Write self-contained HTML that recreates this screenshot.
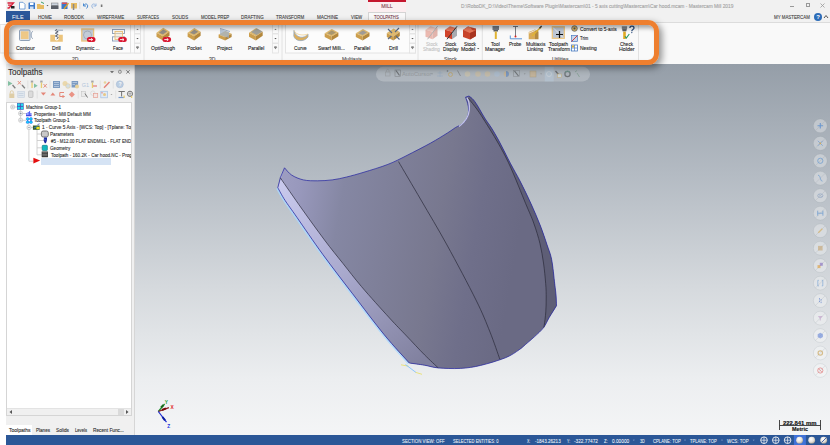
<!DOCTYPE html>
<html><head><meta charset="utf-8">
<style>
*{margin:0;padding:0;box-sizing:border-box}
html,body{width:830px;height:445px;overflow:hidden;background:#fff;font-family:"Liberation Sans",sans-serif;position:relative}
.a{position:absolute}
.t{position:absolute;white-space:nowrap;line-height:1;transform-origin:0 0;-webkit-text-stroke:0.12px currentColor}
</style></head><body>
<div class="a" style="left:6px;top:0px;width:824px;height:22px;background:#f1f1f1"></div>
<div class="a" style="left:6px;top:22px;width:824px;height:42px;background:#f9f9f9;border-top:1px solid #dcdcdc"></div>
<div class="a" style="left:6px;top:64px;width:129px;height:371px;background:#f0f0f0"></div>
<div class="a" style="left:134px;top:64px;width:1px;height:371px;background:#d6d6d6"></div>
<div class="a" style="left:135px;top:64px;width:695px;height:371px;background:linear-gradient(#959ea8 0%,#b4bbc3 30%,#d5d9dd 60%,#eceef0 85%,#f4f5f6 100%)"></div>
<div class="a" style="left:6px;top:435px;width:824px;height:10px;background:#2b5797"></div>
<svg class="a" style="left:0px;top:0px" width="830" height="64" viewBox="0 0 830 64"><rect x="10.5" y="24.5" width="130" height="28.5" fill="#fcfcfc" stroke="#e4e4e4" stroke-width="1"/><rect x="134.5" y="24.5" width="6" height="9.0" fill="#fafafa" stroke="#e2e2e2" stroke-width="0.8"/><rect x="134.5" y="34" width="6" height="9" fill="#fafafa" stroke="#e2e2e2" stroke-width="0.8"/><rect x="134.5" y="43.5" width="6" height="9.5" fill="#fafafa" stroke="#e2e2e2" stroke-width="0.8"/><path d="M136.3,30 L137.5,28.8 L138.7,30Z" fill="#777"/><path d="M136.3,38 L137.5,39.2 L138.7,38Z" fill="#555"/><path d="M136.3,46.5 H138.7 M136.3,47.5 L137.5,48.7 L138.7,47.5Z" stroke="#666" stroke-width="0.6" fill="#555"/><rect x="147.5.5" y="24.5" width="130.5" height="28.5" fill="#fcfcfc" stroke="#e4e4e4" stroke-width="1"/><rect x="272.5" y="24.5" width="6" height="9.0" fill="#fafafa" stroke="#e2e2e2" stroke-width="0.8"/><rect x="272.5" y="34" width="6" height="9" fill="#fafafa" stroke="#e2e2e2" stroke-width="0.8"/><rect x="272.5" y="43.5" width="6" height="9.5" fill="#fafafa" stroke="#e2e2e2" stroke-width="0.8"/><path d="M274.3,30 L275.5,28.8 L276.7,30Z" fill="#777"/><path d="M274.3,38 L275.5,39.2 L276.7,38Z" fill="#555"/><path d="M274.3,46.5 H276.7 M274.3,47.5 L275.5,48.7 L276.7,47.5Z" stroke="#666" stroke-width="0.6" fill="#555"/><rect x="285.5" y="24.5" width="130" height="28.5" fill="#fcfcfc" stroke="#e4e4e4" stroke-width="1"/><rect x="409.5" y="24.5" width="6" height="9.0" fill="#fafafa" stroke="#e2e2e2" stroke-width="0.8"/><rect x="409.5" y="34" width="6" height="9" fill="#fafafa" stroke="#e2e2e2" stroke-width="0.8"/><rect x="409.5" y="43.5" width="6" height="9.5" fill="#fafafa" stroke="#e2e2e2" stroke-width="0.8"/><path d="M411.3,30 L412.5,28.8 L413.7,30Z" fill="#777"/><path d="M411.3,38 L412.5,39.2 L413.7,38Z" fill="#555"/><path d="M411.3,46.5 H413.7 M411.3,47.5 L412.5,48.7 L413.7,47.5Z" stroke="#666" stroke-width="0.6" fill="#555"/><path d="M144,24 V62" stroke="#e2e2e2" stroke-width="1"/><path d="M282,24 V62" stroke="#e2e2e2" stroke-width="1"/><path d="M418,24 V62" stroke="#e2e2e2" stroke-width="1"/><path d="M482.3,24 V62" stroke="#e2e2e2" stroke-width="1"/><path d="M638.5,24 V62" stroke="#e2e2e2" stroke-width="1"/><rect x="19.5" y="30" width="10.5" height="10.5" rx="1" fill="#dfe5ee" stroke="#8396b0" stroke-width="0.9"/><rect x="20.8" y="31.3" width="7.8" height="7.8" fill="#eec887"/><path d="M32.8,31.2 C30.6,32.5 30.6,37.5 32.8,38.8" stroke="#8396b0" stroke-width="0.9" fill="none"/><path d="M50.3,34.8 H55 V39.8 Q56.8,41 58.5,39.8 V34.8 H62.8 V41.8 H50.3Z" fill="#ecc47c"/><path d="M56.8,29 L55.3,30.5 L58.2,31.8 L55.3,33.2 L58.2,34.6 L55.3,36 L58.2,37.4 L56.8,39.2" stroke="#4f5666" stroke-width="0.9" fill="none"/><path d="M57,30.2 H63" stroke="#8396b0" stroke-width="0.8"/><rect x="81.8" y="29" width="11.8" height="12" fill="#c3ccd8" stroke="#ecc47c" stroke-width="1.3"/><circle cx="87.5" cy="35" r="4" fill="none" stroke="#9aa6b6" stroke-width="0.8"/><path d="M89.4,37 H93.0 A2.5,2.5 0 0 1 93.0,42 H89.4 A2.5,2.5 0 0 1 89.4,37Z" fill="#d8152f"/><path d="M88.7,39.6 H92.5 M91.2,38.3 L92.7,39.6 L91.2,40.9" stroke="#fff" stroke-width="0.9" fill="none"/><rect x="112.5" y="29.5" width="12" height="4" fill="none" stroke="#8b9cb5" stroke-width="0.9"/><rect x="112.5" y="36.8" width="12" height="4.2" fill="none" stroke="#8b9cb5" stroke-width="0.9"/><rect x="115" y="31.5" width="7.5" height="8" fill="#f3e4c4" fill-opacity="0.5" stroke="#e9c07a" stroke-width="0.9"/><path d="M120.7,37 H124.3 A2.5,2.5 0 0 1 124.3,42 H120.7 A2.5,2.5 0 0 1 120.7,37Z" fill="#d8152f"/><path d="M120.0,39.6 H123.8 M122.5,38.3 L124.0,39.6 L122.5,40.9" stroke="#fff" stroke-width="0.9" fill="none"/><path d="M156.5,32.626 L163.26,27.8 L169.5,31.61 L163.0,36.182Z" fill="#dfb96e"/><path d="M156.5,32.626 L163.0,36.182 L163.0,40.5 L156.5,36.69Z" fill="#cc9e4c"/><path d="M163.0,36.182 L169.5,31.61 L169.5,35.674 L163.0,40.5Z" fill="#b4883c"/><path d="M158.84,32.626 L163.26,29.578 L167.16,31.61 L163.0,34.404Z" fill="#7e8188" opacity="0.8"/><path d="M165.0,37 H168.60000000000002 A2.5,2.5 0 0 1 168.60000000000002,42 H165.0 A2.5,2.5 0 0 1 165.0,37Z" fill="#d8152f"/><path d="M164.3,39.6 H168.10000000000002 M166.8,38.3 L168.3,39.6 L166.8,40.9" stroke="#fff" stroke-width="0.9" fill="none"/><path d="M187.6,32.75 L194.35999999999999,28 L200.6,31.75 L194.1,36.25Z" fill="#dfb96e"/><path d="M187.6,32.75 L194.1,36.25 L194.1,40.5 L187.6,36.75Z" fill="#cc9e4c"/><path d="M194.1,36.25 L200.6,31.75 L200.6,35.75 L194.1,40.5Z" fill="#b4883c"/><path d="M189.94,32.75 L194.35999999999999,29.75 L198.26,31.75 L194.1,34.5Z" fill="#7e8188" opacity="0.8"/><path d="M218.6,34.61 L225.35999999999999,31 L231.6,33.85 L225.1,37.27Z" fill="#dfb96e"/><path d="M218.6,34.61 L225.1,37.27 L225.1,40.5 L218.6,37.65Z" fill="#cc9e4c"/><path d="M225.1,37.27 L231.6,33.85 L231.6,36.89 L225.1,40.5Z" fill="#b4883c"/><path d="M220,29 L229,32 L229,38 L220,35Z" fill="#9db0c8" opacity="0.7"/><path d="M220,28.5 L230,31.5" stroke="#7890b0" stroke-width="0.7"/><path d="M249,32.75 L256.12399999999997,28 L262.7,31.75 L255.85,36.25Z" fill="#dfb96e"/><path d="M249,32.75 L255.85,36.25 L255.85,40.5 L249,36.75Z" fill="#cc9e4c"/><path d="M255.85,36.25 L262.7,31.75 L262.7,35.75 L255.85,40.5Z" fill="#b4883c"/><path d="M251,32 L257,28.5 L262.5,31.5 L256.5,35Z" fill="#8b98a8" opacity="0.75"/><path d="M294,30.5 C295.5,38 304,39.5 308,34 L308,37 C304,42.5 295,41.5 293.8,36Z" fill="#dcae5c" stroke="#97a9bf" stroke-width="0.8"/><path d="M294,30.5 C296,35 303,36 308,34" fill="none" stroke="#f0d090" stroke-width="0.8"/><path d="M324.7,33.37 L331.82399999999996,29 L338.4,32.45 L331.54999999999995,36.59Z" fill="#dfb96e"/><path d="M324.7,33.37 L331.54999999999995,36.59 L331.54999999999995,40.5 L324.7,37.05Z" fill="#cc9e4c"/><path d="M331.54999999999995,36.59 L338.4,32.45 L338.4,36.13 L331.54999999999995,40.5Z" fill="#b4883c"/><path d="M327.166,33.37 L331.82399999999996,30.61 L335.93399999999997,32.45 L331.54999999999995,34.980000000000004Z" fill="#9a8f70" opacity="0.8"/><path d="M355.8,33.37 L362.924,29 L369.5,32.45 L362.65,36.59Z" fill="#dfb96e"/><path d="M355.8,33.37 L362.65,36.59 L362.65,40.5 L355.8,37.05Z" fill="#cc9e4c"/><path d="M362.65,36.59 L369.5,32.45 L369.5,36.13 L362.65,40.5Z" fill="#b4883c"/><path d="M358.266,33.37 L362.924,30.61 L367.034,32.45 L362.65,34.980000000000004Z" fill="#8f94a0" opacity="0.8"/><path d="M386.8,33.06 L393.56,28.5 L399.8,32.1 L393.3,36.42Z" fill="#dfb96e"/><path d="M386.8,33.06 L393.3,36.42 L393.3,40.5 L386.8,36.9Z" fill="#cc9e4c"/><path d="M393.3,36.42 L399.8,32.1 L399.8,35.94 L393.3,40.5Z" fill="#b4883c"/><path d="M388,29 L392,33 M399,28 L395,32 M388,39 L391.5,36 M399.5,39.5 L396,36" stroke="#5a6a85" stroke-width="1.1"/><g opacity="0.35"><path d="M425.5,29.8 L430.5,26.3 L437.5,28.3 L432.5,31.8Z" fill="#e87a5e"/><path d="M425.5,29.8 L432.5,31.8 L432.5,39.3 L425.5,36.8Z" fill="#d2432a"/><path d="M432.5,31.8 L437.5,28.3 L437.5,35.8 L432.5,39.3Z" fill="#b8351f"/><path d="M427.5,39.3 L437.5,26.3" stroke="#333" stroke-width="1"/></g><g opacity="1"><path d="M445,29.8 L450,26.3 L457,28.3 L452,31.8Z" fill="#e87a5e"/><path d="M445,29.8 L452,31.8 L452,39.3 L445,36.8Z" fill="#d2432a"/><path d="M452,31.8 L457,28.3 L457,35.8 L452,39.3Z" fill="#a8abb0"/><path d="M447,39.3 L457,26.3" stroke="#333" stroke-width="1"/></g><path d="M463,30 L468,26.5 L476,28.5 L476,36 L470,39.5 L463,37Z" fill="#c8442a"/><path d="M463,30 L468,26.5 L471,27.5 Q471,31 476,30.5 L470,33Z" fill="#e8785a"/><path d="M470,33 L476,30.5 L476,36 L470,39.5Z" fill="#a83420"/><rect x="492.5" y="26" width="6.5" height="4" fill="#777c84"/><rect x="493.5" y="30" width="4.5" height="1.5" fill="#5e636a"/><rect x="494.8" y="31.5" width="2" height="7.5" fill="#e0b332"/><path d="M513,26.5 H518 M515.5,26.5 V36" stroke="#6a6f78" stroke-width="0.9"/><circle cx="515.5" cy="36.5" r="1" fill="#d82020"/><path d="M510.3,35.5 V38.8 H522" stroke="#4b8ad4" stroke-width="0.9" fill="none"/><path d="M528.7,32 L535,29.5 L535,39.3 L528.7,39.3Z" fill="#d8aa58"/><path d="M535,29.5 L538.5,31.5 L538.5,39.3 L535,39.3Z" fill="#b48a40"/><path d="M532,36 L541,27" stroke="#e0b332" stroke-width="1.4"/><path d="M539.5,28.3 L541.7,26.1" stroke="#444" stroke-width="1.4"/><path d="M529,33 L536,30" stroke="#fff" stroke-width="0.7"/><rect x="552.3" y="26.8" width="12" height="11.5" fill="#bcc6d4" stroke="#ecc47c" stroke-width="1.2"/><path d="M553,27.5 L563,37.5" stroke="#fff" stroke-width="0.6"/><path d="M559.5,31 V38 M556,34.5 H563" stroke="#111" stroke-width="1.2"/><circle cx="574.5" cy="28.5" r="2.8" fill="#d9b460" stroke="#6a6a6a" stroke-width="0.8"/><circle cx="574.5" cy="28.5" r="1" fill="#555"/><rect x="571.5" y="35.5" width="6" height="6" fill="#c8d6ea" stroke="#4a7ac0" stroke-width="0.7"/><path d="M571.5,41.5 L577.5,35.5" stroke="#d03030" stroke-width="0.9"/><rect x="571.5" y="45" width="6" height="6" fill="#fff" stroke="#4a7ac0" stroke-width="0.8"/><path d="M574.5,45 V51 M571.5,48 H577.5" stroke="#4a7ac0" stroke-width="0.7"/><rect x="572" y="45.5" width="2" height="2" fill="#e0b332"/><path d="M621.8,26.3 H627.1 V29 L626.3,31.2 H622.6 L621.8,29Z" fill="#7f848b"/><rect x="622.8" y="29.2" width="3.3" height="2" fill="#5a5f66"/><rect x="623.2" y="31.7" width="2.6" height="7.3" fill="#e0aa22"/><path d="M625,36.3 L626.3,38 L629.3,34" stroke="#2a9a6a" stroke-width="1.1" fill="none"/><path d="M629.9,28 C629.9,25.6 634,25.6 634,28 C634,29.6 631.8,29.6 631.8,31.3" stroke="#2e4f7e" stroke-width="1.3" fill="none"/><circle cx="631.8" cy="32.6" r="0.7" fill="#2e4f7e"/><path d="M7.5,3 H13.5 L9,8 H7.5 M8,5.2 H12" stroke="#d8203a" stroke-width="1.3" fill="none"/><rect x="11" y="6" width="3.5" height="2.5" fill="#222"/><path d="M19.5,2.3 H23 L25,4.3 V9 H19.5Z" fill="#fff" stroke="#5b8fd0" stroke-width="0.8"/><rect x="28.5" y="2.5" width="6.5" height="6.5" fill="#3b78c8" rx="0.5"/><rect x="30" y="2.8" width="3.5" height="2.2" fill="#fff"/><rect x="30" y="6.5" width="3.5" height="2.5" fill="#d0ddf0"/><path d="M37,4 H40 L41,5 H44 V9 H37Z" fill="#e7bb62"/><path d="M41,2 L44,3.5" stroke="#3aa06a" stroke-width="1"/><path d="M46.5,5 L48.5,5 L47.5,6.2Z" fill="#555"/><rect x="51.5" y="3" width="6.5" height="2.5" fill="#cdd5df" stroke="#777" stroke-width="0.5"/><rect x="51" y="5.5" width="7.5" height="3.5" fill="#5a5e66"/><rect x="61.5" y="2.5" width="6" height="6.5" fill="#3b78c8"/><rect x="62" y="2.5" width="5" height="1.5" fill="#e05050"/><path d="M64,9 L68.5,3.2" stroke="#e0a020" stroke-width="1.3"/><rect x="71" y="3" width="6" height="5.5" fill="#e7bb62"/><rect x="72.8" y="4" width="1.5" height="6" fill="#888"/><path d="M79.8,2 V9" stroke="#d0d0d0" stroke-width="0.7"/><path d="M83.5,3.5 V6 H86 M83.8,5.8 C84.5,3 88.5,3.5 87.5,7 L86.5,8.5" stroke="#4a8ad0" stroke-width="1" fill="none"/><path d="M96,3.5 V6 H93.5 M95.7,5.8 C95,3 91,3.5 92,7 L93,8.5" stroke="#9ab8e0" stroke-width="1" fill="none"/><rect x="100.8" y="4.5" width="1.6" height="2.5" fill="#777"/></svg>
<div class="t" style="left:461.00px;top:4px;font-size:5.2px;color:#a4a4a4;transform:scaleX(0.935);">D:\RoboDK_D:\Video\Theme\Software Plugin\Mastercam\01 - 5 axis cutting\Mastercam\Car hood.mcam - Mastercam Mill 2019</div>
<div class="a" style="left:790px;top:5.5px;width:4px;height:0.8px;background:#999"></div>
<div class="a" style="left:806px;top:3px;width:3.5px;height:3.5px;border:0.8px solid #999"></div>
<svg class="a" style="left:820px;top:3px" width="5" height="5" viewBox="0 0 5 5"><path d="M0.5,0.5 L4.5,4.5 M4.5,0.5 L0.5,4.5" stroke="#999" stroke-width="0.8"/></svg>
<div class="a" style="left:368px;top:0px;width:38px;height:2px;background:#c5162e"></div>
<div class="a" style="left:368px;top:2px;width:38px;height:10px;background:#fbeef0"></div>
<div class="t" style="left:381.22px;top:4px;font-size:5.2px;color:#8a4a55;">MILL</div>
<div class="a" style="left:6px;top:11px;width:24px;height:11px;background:#2b579a"></div>
<div class="t" style="left:12.20px;top:15px;font-size:5.4px;color:#fff;transform:scaleX(1.017);-webkit-text-stroke:0">FILE</div>
<div class="t" style="left:37.60px;top:15px;font-size:5.5px;color:#444;transform:scaleX(0.842);">HOME</div>
<div class="t" style="left:64.00px;top:15px;font-size:5.5px;color:#444;transform:scaleX(0.839);">ROBODK</div>
<div class="t" style="left:97.00px;top:15px;font-size:5.5px;color:#444;transform:scaleX(0.806);">WIREFRAME</div>
<div class="t" style="left:137.00px;top:15px;font-size:5.5px;color:#444;transform:scaleX(0.742);">SURFACES</div>
<div class="t" style="left:171.60px;top:15px;font-size:5.5px;color:#444;transform:scaleX(0.803);">SOLIDS</div>
<div class="t" style="left:200.50px;top:15px;font-size:5.5px;color:#444;transform:scaleX(0.786);">MODEL PREP</div>
<div class="t" style="left:241.00px;top:15px;font-size:5.5px;color:#444;transform:scaleX(0.808);">DRAFTING</div>
<div class="t" style="left:276.40px;top:15px;font-size:5.5px;color:#444;transform:scaleX(0.810);">TRANSFORM</div>
<div class="t" style="left:317.00px;top:15px;font-size:5.5px;color:#444;transform:scaleX(0.828);">MACHINE</div>
<div class="t" style="left:350.80px;top:15px;font-size:5.5px;color:#444;transform:scaleX(0.797);">VIEW</div>
<div class="a" style="left:368px;top:12px;width:38px;height:11px;background:#f9f9f9;border:1px solid #d4d4d4;border-bottom:none"></div>
<div class="t" style="left:374.30px;top:15px;font-size:5.5px;color:#7a3a4a;transform:scaleX(0.762);">TOOLPATHS</div>
<div class="t" style="left:773.60px;top:15px;font-size:5.5px;color:#444;transform:scaleX(0.799);">MY MASTERCAM</div>
<div class="a" style="left:814px;top:13px;width:8px;height:8px;border-radius:50%;background:#2c6cb8;color:#fff;font-size:6px;line-height:8px;text-align:center;font-weight:bold">?</div>
<svg class="a" style="left:823px;top:14px" width="6" height="5" viewBox="0 0 6 5"><path d="M1 4 L3 1.5 L5 4" stroke="#555" stroke-width="1" fill="none"/></svg>
<div class="t" style="left:16.10px;top:46px;font-size:5.4px;color:#262626;transform:scaleX(0.973);">Contour</div>
<div class="t" style="left:52.00px;top:46px;font-size:5.4px;color:#262626;transform:scaleX(0.936);">Drill</div>
<div class="t" style="left:75.50px;top:46px;font-size:5.4px;color:#262626;transform:scaleX(0.870);">Dynamic ...</div>
<div class="t" style="left:113.40px;top:46px;font-size:5.4px;color:#262626;transform:scaleX(0.841);">Face</div>
<div class="t" style="left:151.00px;top:46px;font-size:5.4px;color:#262626;transform:scaleX(0.930);">OptiRough</div>
<div class="t" style="left:187.00px;top:46px;font-size:5.4px;color:#262626;transform:scaleX(0.878);">Pocket</div>
<div class="t" style="left:217.00px;top:46px;font-size:5.4px;color:#262626;transform:scaleX(0.892);">Project</div>
<div class="t" style="left:247.60px;top:46px;font-size:5.4px;color:#262626;transform:scaleX(0.911);">Parallel</div>
<div class="t" style="left:294.00px;top:46px;font-size:5.4px;color:#262626;transform:scaleX(0.889);">Curve</div>
<div class="t" style="left:318.00px;top:46px;font-size:5.4px;color:#262626;transform:scaleX(0.928);">Swarf Milli...</div>
<div class="t" style="left:354.00px;top:46px;font-size:5.4px;color:#262626;transform:scaleX(0.911);">Parallel</div>
<div class="t" style="left:388.50px;top:46px;font-size:5.4px;color:#262626;transform:scaleX(0.968);">Drill</div>
<div class="t" style="left:425.80px;top:42px;font-size:5.4px;color:#c4c4c4;transform:scaleX(0.859);">Stock</div>
<div class="t" style="left:423.30px;top:47px;font-size:5.4px;color:#c4c4c4;transform:scaleX(0.853);">Shading</div>
<div class="t" style="left:445.00px;top:42px;font-size:5.4px;color:#262626;transform:scaleX(0.829);">Stock</div>
<div class="t" style="left:442.80px;top:47px;font-size:5.4px;color:#262626;transform:scaleX(0.875);">Display</div>
<div class="t" style="left:463.70px;top:42px;font-size:5.4px;color:#262626;transform:scaleX(0.889);">Stock</div>
<div class="t" style="left:460.90px;top:47px;font-size:5.4px;color:#262626;transform:scaleX(0.959);">Model</div>
<svg class="a" style="left:476.5px;top:48px" width="3" height="2" viewBox="0 0 3 2"><path d="M0,0 H2.4 L1.2,1.3Z" fill="#555"/></svg>
<div class="t" style="left:491.40px;top:42px;font-size:5.4px;color:#262626;transform:scaleX(0.878);">Tool</div>
<div class="t" style="left:485.40px;top:47px;font-size:5.4px;color:#262626;transform:scaleX(0.943);">Manager</div>
<div class="t" style="left:509.30px;top:42px;font-size:5.4px;color:#262626;transform:scaleX(0.867);">Probe</div>
<div class="t" style="left:525.60px;top:42px;font-size:5.4px;color:#262626;transform:scaleX(0.928);">Multiaxis</div>
<div class="t" style="left:527.20px;top:47px;font-size:5.4px;color:#262626;transform:scaleX(0.947);">Linking</div>
<div class="t" style="left:548.90px;top:42px;font-size:5.4px;color:#262626;transform:scaleX(0.931);">Toolpath</div>
<div class="t" style="left:547.80px;top:47px;font-size:5.4px;color:#262626;transform:scaleX(0.910);">Transform</div>
<div class="t" style="left:620.00px;top:42px;font-size:5.4px;color:#262626;transform:scaleX(0.849);">Check</div>
<div class="t" style="left:619.00px;top:47px;font-size:5.4px;color:#262626;transform:scaleX(0.981);">Holder</div>
<div class="t" style="left:579.90px;top:27px;font-size:5.4px;color:#262626;transform:scaleX(0.899);">Convert to 5-axis</div>
<div class="t" style="left:579.90px;top:36px;font-size:5.4px;color:#262626;transform:scaleX(0.774);">Trim</div>
<div class="t" style="left:579.90px;top:46px;font-size:5.4px;color:#262626;transform:scaleX(0.923);">Nesting</div>
<div class="t" style="left:72.22px;top:57px;font-size:5.4px;color:#555;transform:scaleX(0.950);">2D</div>
<div class="t" style="left:208.72px;top:57px;font-size:5.4px;color:#555;transform:scaleX(0.950);">3D</div>
<div class="t" style="left:342.02px;top:57px;font-size:5.4px;color:#555;transform:scaleX(0.950);">Multiaxis</div>
<div class="t" style="left:444.28px;top:57px;font-size:5.4px;color:#555;transform:scaleX(0.950);">Stock</div>
<div class="t" style="left:551.73px;top:57px;font-size:5.4px;color:#555;transform:scaleX(0.950);">Utilities</div>
<div class="t" style="left:8.00px;top:68px;font-size:9px;color:#333;transform:scaleX(0.895);">Toolpaths</div>
<div class="a" style="left:6px;top:101.5px;width:126px;height:314px;background:#fff;border:1px solid #d5d5d5"></div>
<div class="a" style="left:7px;top:102px;width:124px;height:300px;overflow:hidden">
<div class="t" style="left:18.60px;top:3px;font-size:5.0px;color:#333;transform:scaleX(0.906)">Machine Group-1</div>
<div class="t" style="left:27.00px;top:10px;font-size:5.0px;color:#333;transform:scaleX(0.92)">Properties - Mill Default MM</div>
<div class="t" style="left:27.00px;top:16px;font-size:5.0px;color:#333;transform:scaleX(0.92)">Toolpath Group-1</div>
<div class="t" style="left:34.90px;top:23px;font-size:5.0px;color:#333;transform:scaleX(0.945)">1 - Curve 5 Axis - [WCS: Top] - [Tplane: Top]</div>
<div class="t" style="left:43.20px;top:30px;font-size:5.0px;color:#333;transform:scaleX(0.92)">Parameters</div>
<div class="t" style="left:43.80px;top:37px;font-size:5.0px;color:#333;transform:scaleX(0.883)">#5 - M12.00 FLAT ENDMILL - FLAT ENDMILL</div>
<div class="t" style="left:43.20px;top:44px;font-size:5.0px;color:#333;transform:scaleX(0.92)">Geometry</div>
<div class="t" style="left:43.50px;top:51px;font-size:5.0px;color:#333;transform:scaleX(0.92)">Toolpath - 160.2K - Car hood.NC - Program number 0</div>
</div>
<div class="a" style="left:41.3px;top:158.2px;width:70px;height:6.4px;background:#d5e3f4"></div>
<svg class="a" style="left:0px;top:64px" width="136" height="110" viewBox="0 64 136 110"><path d="M110,71.2 H114 L112,73Z" fill="#555"/><rect x="118.6" y="70.3" width="2.6" height="3" rx="1" fill="none" stroke="#777" stroke-width="0.8"/><path d="M126.3,70.3 L129.7,73.5 M129.7,70.3 L126.3,73.5" stroke="#777" stroke-width="0.9"/><g opacity="0.72"><path d="M8,81 L12.5,83.5 L8,86Z" fill="#5cae86"/><path d="M12.5,85 L15.3,88.2" stroke="#555" stroke-width="1.3"/><path d="M17.8,81 L21,84.5 M21,81 L17.8,84.5" stroke="#e0705a" stroke-width="1"/><path d="M22,85 L24.9,88.2" stroke="#555" stroke-width="1.3"/><path d="M27.8,80.5 V88.5" stroke="#d8d8d8" stroke-width="0.8"/><rect x="30.8" y="80.6" width="2.4" height="2" fill="#888"/><rect x="31.4" y="82.6" width="1.3" height="5.4" fill="#e6c040"/><path d="M34,83.5 L37.7,85.7 L34,88Z" fill="#5cae86"/><rect x="40.2" y="80.6" width="2.4" height="2" fill="#888"/><rect x="40.8" y="82.6" width="1.3" height="5.4" fill="#e6c040"/><path d="M43.5,84 L46.8,87.6 M46.8,84 L43.5,87.6" stroke="#e0705a" stroke-width="1"/><path d="M50,80.5 V88.5" stroke="#d8d8d8" stroke-width="0.8"/><rect x="53" y="81" width="7" height="7" fill="#4f7ab0"/><path d="M54,82.5 H59 M54,84.5 H59 M54,86.5 H59" stroke="#c8d8ee" stroke-width="0.6"/><circle cx="65" cy="83.5" r="2.5" fill="#e6c77a" opacity="0.8"/><circle cx="68" cy="86" r="2.3" fill="#c8d8e0" stroke="#e0c070" stroke-width="0.6"/><rect x="71.6" y="81" width="6.5" height="6.5" fill="#4f7ab0"/><path d="M72.5,82.5 H77 M72.5,84.5 H75" stroke="#c8d8ee" stroke-width="0.6"/><circle cx="77" cy="86.5" r="2" fill="#e6c77a"/><text x="81.8" y="87" font-family="Liberation Sans" font-size="5.5" fill="#9ab4d4">G1</text><rect x="91.2" y="80.6" width="2.4" height="2" fill="#888"/><rect x="91.8" y="82.6" width="1.3" height="5.4" fill="#e6c040"/><path d="M93,86 H97" stroke="#e05050" stroke-width="1.2"/><path d="M100.3,80.5 V88.5" stroke="#d8d8d8" stroke-width="0.8"/><path d="M104,87.8 L109.5,82" stroke="#e05a4a" stroke-width="1.4"/><circle cx="105" cy="82.5" r="1.3" fill="#e6c77a"/><path d="M113.3,80.5 V88.5" stroke="#d8d8d8" stroke-width="0.8"/><circle cx="119.8" cy="84.3" r="3.5" fill="#a8c0dc" stroke="#8aa8cc" stroke-width="0.6"/><text x="118.6" y="86.3" font-family="Liberation Sans" font-size="5" fill="#fff" font-weight="bold">?</text><rect x="9.3" y="93.5" width="5" height="4.5" fill="#d8c08a"/><path d="M10.3,93.5 V92 C10.3,90.3 13.3,90.3 13.3,92 V93.5" stroke="#d8c08a" stroke-width="0.9" fill="none"/><rect x="17.8" y="91.5" width="6.5" height="6" fill="#dbe4ee" stroke="#b4c4d8" stroke-width="0.6"/><path d="M18.5,93.5 H23.5 M18.5,95.5 H23.5" stroke="#a8bcd4" stroke-width="0.6"/><rect x="28.5" y="91" width="4.5" height="6.5" rx="1" fill="#d4d4d4" stroke="#999" stroke-width="0.6"/><path d="M37.2,90.5 V98.5" stroke="#d8d8d8" stroke-width="0.8"/><path d="M40.8,92.5 H46 L43.4,95.5Z" fill="#e0604c"/><path d="M50.4,95.5 H55.3 L52.8,92.5Z" fill="#e0604c"/><path d="M64,92.5 H59.8 V96.5 H64 M62.5,95.5 L64.5,96.5 L62.5,97.5" stroke="#e0604c" stroke-width="1" fill="none"/><path d="M71.8,91.5 L74.8,94.5 L71.8,97.5 L68.8,94.5Z" fill="#e8705c"/><path d="M78.3,90.5 V98.5" stroke="#d8d8d8" stroke-width="0.8"/><rect x="81.5" y="91.5" width="4" height="5" fill="#e8e8e8" stroke="#aaa" stroke-width="0.5"/><path d="M85,93.5 L87.5,97.5" stroke="#444" stroke-width="1"/><circle cx="92.8" cy="93.2" r="2.2" fill="none" stroke="#c8c8c8" stroke-width="0.6"/><rect x="93.5" y="93.5" width="4.2" height="4" fill="#f8e0dc" stroke="#e08070" stroke-width="0.7"/><rect x="100.8" y="91.3" width="6.8" height="6.5" fill="#dce8f6" stroke="#8ab0dc" stroke-width="0.7"/><circle cx="104.5" cy="94.5" r="1.5" fill="#e6b860"/><rect x="101.5" y="92" width="1" height="1.5" fill="#e05050"/><path d="M110.5,94 H112.5 L111.5,95Z" fill="#777"/><path d="M115.7,90.5 V98.5" stroke="#d8d8d8" stroke-width="0.8"/><path d="M118.5,91.5 H124.8 M121.6,91.5 V96.5" stroke="#444" stroke-width="1"/><path d="M118.5,97.5 H124" stroke="#4a7ac0" stroke-width="1.2"/><rect x="123.5" y="95.5" width="1.3" height="2.5" fill="#e6c040"/><circle cx="130" cy="93.8" r="2.6" fill="#fff" stroke="#333" stroke-width="0.9"/><path d="M128,93.8 H132 M130,91.5 V96" stroke="#333" stroke-width="0.5"/><rect x="131" y="96" width="1.2" height="2" fill="#e6c040"/></g><path d="M12.6,107 H17 M20.6,110 V120.3 M22.6,113.5 H26 M22.6,120.3 H26 M28.9,123.3 V161.2 H33.4 M30.9,127.5 H32.9 M37,130 V154.8 M37,134 H41.2 M37,140.5 H43.3 M37,147.8 H42.2 M37,154.8 H41.7" stroke="#c6c6c6" stroke-width="0.8" fill="none"/><rect x="10.7" y="105.1" width="3.8" height="3.8" rx="1.2" fill="#f4f4f4" stroke="#bdbdbd" stroke-width="0.7"/><path d="M11.7,107.0 H13.5" stroke="#6a7a90" stroke-width="0.6"/><rect x="18.7" y="111.5" width="3.9" height="3.9" rx="1.2" fill="#f4f4f4" stroke="#bdbdbd" stroke-width="0.7"/><path d="M19.7,113.45 H21.6 M20.65,112.5 V114.4" stroke="#6a7a90" stroke-width="0.6"/><rect x="18.7" y="118.3" width="3.8" height="3.8" rx="1.2" fill="#f4f4f4" stroke="#bdbdbd" stroke-width="0.7"/><path d="M19.7,120.2 H21.5" stroke="#6a7a90" stroke-width="0.6"/><rect x="27.1" y="125.6" width="3.8" height="3.8" rx="1.2" fill="#f4f4f4" stroke="#bdbdbd" stroke-width="0.7"/><path d="M28.1,127.5 H29.900000000000002" stroke="#6a7a90" stroke-width="0.6"/><rect x="17" y="103.1" width="6.7" height="6.7" fill="#4a5ab8"/><circle cx="18.7" cy="104.8" r="1.3" fill="#20e0f0"/><circle cx="22" cy="104.8" r="1.3" fill="#20e0f0"/><circle cx="18.7" cy="108.1" r="1.3" fill="#20e0f0"/><circle cx="22" cy="108.1" r="1.3" fill="#20e0f0"/><path d="M26,115.7 H31.6" stroke="#1a1ae0" stroke-width="1"/><path d="M26.8,115 V113 M28.2,115 V112 M29.6,115 V111.2 M30.9,115 V113" stroke="#2a3af0" stroke-width="0.9"/><path d="M27.6,118.9 H31 V122.2 H27.6Z" fill="#fff" stroke="#3050f0" stroke-width="0.8"/><circle cx="27.6" cy="118.9" r="1.4" fill="#10d8ff" stroke="#2040e0" stroke-width="0.4"/><circle cx="31" cy="118.9" r="1.4" fill="#10d8ff" stroke="#2040e0" stroke-width="0.4"/><circle cx="27.6" cy="122.2" r="1.4" fill="#10d8ff" stroke="#2040e0" stroke-width="0.4"/><circle cx="31" cy="122.2" r="1.4" fill="#10d8ff" stroke="#2040e0" stroke-width="0.4"/><path d="M32.9,125.5 H39.6 V129.8 H32.9Z" fill="#3a5a2a"/><path d="M34,128 L37.5,126.3" stroke="#2a8ad0" stroke-width="0.9"/><ellipse cx="38" cy="128" rx="1.8" ry="1.3" fill="#e8e020"/><path d="M37.5,124.7 L39.6,123.8" stroke="#2a3ab0" stroke-width="0.7"/><rect x="41.4" y="131" width="6.9" height="6" rx="1.8" fill="#c8c8c8" stroke="#6a6a6a" stroke-width="0.9"/><path d="M44,137.6 H47 V140.5 L45.8,143.3 H44.8 L43.6,140.5Z" fill="#1a2aa0"/><path d="M44,139 L47,140.5" stroke="#6a8ae0" stroke-width="0.5"/><rect x="42.2" y="145.3" width="5.2" height="5.2" rx="0.8" fill="#10b8c0" stroke="#087078" stroke-width="0.6"/><rect x="41.7" y="151.5" width="6.2" height="5.7" fill="#222"/><path d="M42.2,152.8 H47.4 M42.2,154.3 H47.4 M42.2,155.8 H47.4" stroke="#ddd" stroke-width="0.5"/><path d="M33.4,157.7 L40.2,160.5 L33.4,163.4Z" fill="#e41010"/></svg>
<div class="a" style="left:7px;top:408px;width:124px;height:7px;background:#f0f0f0;border-top:1px solid #e3e3e3"></div>
<div class="a" style="left:118px;top:409px;width:6px;height:6px;background:#dadada"></div>
<svg class="a" style="left:8px;top:409px" width="6" height="6" viewBox="0 0 6 6"><path d="M4 1 L1.5 3 L4 5Z" fill="#555"/></svg>
<svg class="a" style="left:124px;top:409px" width="6" height="6" viewBox="0 0 6 6"><path d="M2 1 L4.5 3 L2 5Z" fill="#555"/></svg>
<div class="a" style="left:6px;top:425px;width:26px;height:10px;background:#fff"></div>
<div class="t" style="left:8.50px;top:428px;font-size:5.2px;color:#333;transform:scaleX(0.966);">Toolpaths</div>
<div class="t" style="left:36.00px;top:428px;font-size:5.2px;color:#333;transform:scaleX(0.880);">Planes</div>
<div class="t" style="left:56.00px;top:428px;font-size:5.2px;color:#333;transform:scaleX(0.918);">Solids</div>
<div class="t" style="left:75.00px;top:428px;font-size:5.2px;color:#333;transform:scaleX(0.798);">Levels</div>
<div class="t" style="left:93.00px;top:428px;font-size:5.2px;color:#333;transform:scaleX(0.917);">Recent Func...</div>
<div class="t" style="left:402.00px;top:439px;font-size:5.0px;color:#f4f7fc;transform:scaleX(0.870);-webkit-text-stroke:0.05px #fff">SECTION VIEW: OFF</div>
<div class="t" style="left:453.20px;top:439px;font-size:5.0px;color:#f4f7fc;transform:scaleX(0.815);-webkit-text-stroke:0.05px #fff">SELECTED ENTITIES: 0</div>
<div class="t" style="left:526.70px;top:439px;font-size:5.0px;color:#f4f7fc;transform:scaleX(0.699);-webkit-text-stroke:0.05px #fff">X:</div>
<div class="t" style="left:534.80px;top:439px;font-size:5.0px;color:#f4f7fc;transform:scaleX(0.915);-webkit-text-stroke:0.05px #fff">-1843.26213</div>
<div class="t" style="left:566.90px;top:439px;font-size:5.0px;color:#f4f7fc;transform:scaleX(0.697);-webkit-text-stroke:0.05px #fff">Y:</div>
<div class="t" style="left:574.00px;top:439px;font-size:5.0px;color:#f4f7fc;transform:scaleX(0.949);-webkit-text-stroke:0.05px #fff">-322.77472</div>
<div class="t" style="left:604.30px;top:439px;font-size:5.0px;color:#f4f7fc;transform:scaleX(0.833);-webkit-text-stroke:0.05px #fff">Z:</div>
<div class="t" style="left:612.40px;top:439px;font-size:5.0px;color:#f4f7fc;transform:scaleX(0.952);-webkit-text-stroke:0.05px #fff">0.00000</div>
<div class="t" style="left:640.00px;top:439px;font-size:5.0px;color:#f4f7fc;transform:scaleX(0.751);-webkit-text-stroke:0.05px #fff">3D</div>
<div class="t" style="left:652.60px;top:439px;font-size:5.0px;color:#f4f7fc;transform:scaleX(0.845);-webkit-text-stroke:0.05px #fff">CPLANE: TOP</div>
<div class="t" style="left:690.00px;top:439px;font-size:5.0px;color:#f4f7fc;transform:scaleX(0.829);-webkit-text-stroke:0.05px #fff">TPLANE: TOP</div>
<div class="t" style="left:727.00px;top:439px;font-size:5.0px;color:#f4f7fc;transform:scaleX(0.884);-webkit-text-stroke:0.05px #fff">WCS: TOP</div>
<svg class="a" style="left:0px;top:435px" width="830" height="10" viewBox="0 435 830 10"><path d="M632.8,439.8 H634.8 L633.8,440.8Z" fill="#9ab0d8"/><path d="M684,439.8 H686 L685,440.8Z" fill="#9ab0d8"/><path d="M721,439.8 H723 L722,440.8Z" fill="#9ab0d8"/><path d="M752.7,439.8 H754.7 L753.7,440.8Z" fill="#9ab0d8"/><rect x="793.9" y="435" width="12" height="10" fill="#3f72d8"/><circle cx="764" cy="440.2" r="3.3" fill="none" stroke="#f4f4f4" stroke-width="0.9"/><path d="M760.7,440.2 H767.3 M764,436.9 V443.5" stroke="#f4f4f4" stroke-width="0.7"/><circle cx="775.8" cy="440.2" r="3.3" fill="none" stroke="#f4f4f4" stroke-width="0.9"/><path d="M772.5,440.2 H779.0999999999999 M775.8,436.9 V443.5" stroke="#f4f4f4" stroke-width="0.7"/><circle cx="787.6" cy="440.2" r="3.3" fill="none" stroke="#f4f4f4" stroke-width="0.9"/><path d="M784.3000000000001,440.2 H790.9 M787.6,436.9 V443.5" stroke="#f4f4f4" stroke-width="0.7"/><defs><radialGradient id="sph" cx="0.4" cy="0.35" r="0.7"><stop offset="0" stop-color="#ffffff"/><stop offset="0.6" stop-color="#e4e0d8"/><stop offset="1" stop-color="#a8a090"/></radialGradient></defs><circle cx="799.6" cy="440.2" r="3.4" fill="url(#sph)"/><circle cx="811.7" cy="440.2" r="3.4" fill="url(#sph)"/><circle cx="823.7" cy="440.2" r="3.4" fill="url(#sph)"/><path d="M821.5,442.5 L826,438" stroke="#3a5aa0" stroke-width="0.9"/></svg>
<svg class="a" style="left:0px;top:0px" width="830" height="445" viewBox="0 0 830 445"><defs>
<linearGradient id="gf" gradientUnits="userSpaceOnUse" x1="285" y1="190" x2="520" y2="230">
<stop offset="0" stop-color="#9c9cc0"/><stop offset="0.06" stop-color="#9898bc"/><stop offset="0.24" stop-color="#8587a3"/><stop offset="0.66" stop-color="#78788f"/><stop offset="0.82" stop-color="#6f6f8a"/><stop offset="1" stop-color="#6a6a84"/></linearGradient>
<linearGradient id="gl" gradientUnits="userSpaceOnUse" x1="280" y1="180" x2="420" y2="365">
<stop offset="0" stop-color="#cacaee"/><stop offset="0.5" stop-color="#a8a8cc"/><stop offset="1" stop-color="#80809e"/></linearGradient>
</defs>
<path d="M409.3,363 C405.1,358.3 393.6,346.2 384.2,334.7 C374.8,323.2 362.8,307.1 352.6,293.8 C342.4,280.5 332.3,267.4 323.0,254.7 C313.7,241.9 303.2,226.4 296.9,217.3 C290.6,208.2 288.2,205.2 285.0,200.3 C281.8,195.4 279.0,189.8 277.8,187.7" fill="none" stroke="#a8d8ff" stroke-width="2.4" stroke-opacity="0.8" transform="translate(-0.6,0.4)"/>
<path d="M284.5,167.8 C285.7,169.0 288.6,173.1 291.7,175.1 C294.8,177.1 299.0,178.9 303.3,179.9 C307.6,180.9 312.9,180.8 317.7,180.8 C322.5,180.8 327.4,180.5 332.2,179.9 C337.0,179.3 341.4,178.3 346.7,177.0 C352.0,175.7 357.1,174.3 364.0,172.2 C370.9,170.1 380.7,167.2 387.9,164.4 C395.1,161.6 399.9,159.0 407.0,155.4 C414.1,151.8 423.9,146.8 430.6,143.1 C437.3,139.4 443.2,135.6 447.4,133.0 C451.6,130.4 453.0,129.1 455.6,127.5 C458.2,125.9 460.9,125.2 462.8,123.5 C464.8,121.8 466.3,119.5 467.3,117.2 C468.3,115.0 468.5,112.2 468.6,110.0 C468.7,107.8 468.2,105.8 467.7,103.7 C467.2,101.6 465.9,98.3 465.5,97.2 L469,96 C469.8,96.7 471.9,98.0 473.6,100.0 C475.3,102.0 477.1,105.0 479.0,108.2 C480.9,111.4 483.2,115.7 485.3,119.0 C487.4,122.3 489.2,124.3 491.5,128.0 C493.8,131.7 495.8,135.1 499.0,141.0 C502.2,146.9 507.1,157.0 510.6,163.7 C514.1,170.4 516.6,174.3 520.0,181.0 C523.4,187.7 527.7,196.4 531.0,203.7 C534.3,211.0 537.3,217.9 540.0,224.8 C542.7,231.7 545.2,239.2 547.1,245.0 C549.0,250.8 550.3,252.9 551.6,259.4 C552.9,265.8 554.0,277.8 554.7,283.7 C555.4,289.6 555.7,291.3 556.0,295.0 C556.3,298.7 556.4,303.9 556.5,305.7 C555.3,307.7 551.4,313.9 549.2,317.5 C547.1,321.1 546.0,324.4 543.6,327.6 C541.2,330.8 537.6,333.8 534.6,336.6 C531.6,339.4 528.2,342.2 525.6,344.4 C523.0,346.6 522.4,347.6 519.1,349.8 C515.8,352.0 512.0,355.1 505.6,357.7 C499.2,360.3 488.2,363.6 480.7,365.4 C473.2,367.2 467.5,368.0 460.4,368.4 C453.3,368.8 444.2,368.4 438.2,367.9 C432.2,367.4 429.4,366.0 424.6,365.2 C419.8,364.4 411.9,363.4 409.3,363.0 C405.1,358.3 393.6,346.2 384.2,334.7 C374.8,323.2 362.8,307.1 352.6,293.8 C342.4,280.5 332.3,267.4 323.0,254.7 C313.7,241.9 303.2,226.4 296.9,217.3 C290.6,208.2 288.2,205.2 285.0,200.3 C281.8,195.4 279.0,189.8 277.8,187.7 L280.3,177.8 Z" fill="url(#gf)"/>
<path d="M284.5,167.8 L280.3,177.8 C283.9,183.0 294.6,198.6 302.0,209.0 C309.4,219.4 317.7,230.9 324.5,240.0 C331.3,249.1 336.8,255.7 343.0,263.5 C349.2,271.3 353.8,277.5 361.5,286.6 C369.2,295.7 382.0,309.8 389.5,318.0 C397.0,326.2 400.8,329.9 406.6,336.0 C412.5,342.1 419.3,349.6 424.6,354.9 C429.9,360.2 435.9,365.7 438.2,367.9 L424.6,365.2 L409.3,363 C405.1,358.3 393.6,346.2 384.2,334.7 C374.8,323.2 362.8,307.1 352.6,293.8 C342.4,280.5 332.3,267.4 323.0,254.7 C313.7,241.9 303.2,226.4 296.9,217.3 C290.6,208.2 288.2,205.2 285.0,200.3 C281.8,195.4 279.0,189.8 277.8,187.7 Z" fill="url(#gl)"/>
<path d="M469,96 C469.8,96.7 471.9,98.0 473.6,100.0 C475.3,102.0 477.1,105.0 479.0,108.2 C480.9,111.4 483.2,115.7 485.3,119.0 C487.4,122.3 489.2,124.3 491.5,128.0 C493.8,131.7 495.8,135.1 499.0,141.0 C502.2,146.9 507.1,157.0 510.6,163.7 C514.1,170.4 516.6,174.3 520.0,181.0 C523.4,187.7 527.7,196.4 531.0,203.7 C534.3,211.0 537.3,217.9 540.0,224.8 C542.7,231.7 545.2,239.2 547.1,245.0 C549.0,250.8 550.3,252.9 551.6,259.4 C552.9,265.8 554.0,277.8 554.7,283.7 C555.4,289.6 555.7,291.3 556.0,295.0 C556.3,298.7 556.4,303.9 556.5,305.7 L549.2,317.5 L543.6,327.6 C543.7,327.2 543.8,327.9 544.2,325.3 C544.6,322.7 545.5,316.4 545.8,311.9 C546.1,307.3 546.2,302.7 546.2,298.0 C546.2,293.3 546.2,289.5 545.7,283.7 C545.2,277.9 544.5,269.7 543.5,263.0 C542.5,256.3 541.6,250.4 540.0,243.7 C538.4,237.0 536.1,229.7 533.7,223.0 C531.3,216.3 529.7,213.2 525.7,203.7 C521.8,194.2 514.7,176.3 510.0,166.0 C505.3,155.7 501.7,149.4 497.5,142.0 C493.3,134.6 488.3,126.8 485.0,121.5 C481.7,116.2 480.3,113.9 477.5,110.0 C474.7,106.1 469.8,100.2 468.3,98.2 Z" fill="#5e5e76"/>
<path d="M284.5,167.8 C285.7,169.0 288.6,173.1 291.7,175.1 C294.8,177.1 299.0,178.9 303.3,179.9 C307.6,180.9 312.9,180.8 317.7,180.8 C322.5,180.8 327.4,180.5 332.2,179.9 C337.0,179.3 341.4,178.3 346.7,177.0 C352.0,175.7 357.1,174.3 364.0,172.2 C370.9,170.1 380.7,167.2 387.9,164.4 C395.1,161.6 399.9,159.0 407.0,155.4 C414.1,151.8 423.9,146.8 430.6,143.1 C437.3,139.4 443.2,135.6 447.4,133.0 C451.6,130.4 453.0,129.1 455.6,127.5 C458.2,125.9 460.9,125.2 462.8,123.5 C464.8,121.8 466.3,119.5 467.3,117.2 C468.3,115.0 468.5,112.2 468.6,110.0 C468.7,107.8 468.2,105.8 467.7,103.7 C467.2,101.6 465.9,98.3 465.5,97.2 L469,96 C469.8,96.7 471.9,98.0 473.6,100.0 C475.3,102.0 477.1,105.0 479.0,108.2 C480.9,111.4 483.2,115.7 485.3,119.0 C487.4,122.3 489.2,124.3 491.5,128.0 C493.8,131.7 495.8,135.1 499.0,141.0 C502.2,146.9 507.1,157.0 510.6,163.7 C514.1,170.4 516.6,174.3 520.0,181.0 C523.4,187.7 527.7,196.4 531.0,203.7 C534.3,211.0 537.3,217.9 540.0,224.8 C542.7,231.7 545.2,239.2 547.1,245.0 C549.0,250.8 550.3,252.9 551.6,259.4 C552.9,265.8 554.0,277.8 554.7,283.7 C555.4,289.6 555.7,291.3 556.0,295.0 C556.3,298.7 556.4,303.9 556.5,305.7 C555.3,307.7 551.4,313.9 549.2,317.5 C547.1,321.1 546.0,324.4 543.6,327.6 C541.2,330.8 537.6,333.8 534.6,336.6 C531.6,339.4 528.2,342.2 525.6,344.4 C523.0,346.6 522.4,347.6 519.1,349.8 C515.8,352.0 512.0,355.1 505.6,357.7 C499.2,360.3 488.2,363.6 480.7,365.4 C473.2,367.2 467.5,368.0 460.4,368.4 C453.3,368.8 444.2,368.4 438.2,367.9 C432.2,367.4 429.4,366.0 424.6,365.2 C419.8,364.4 411.9,363.4 409.3,363.0 C405.1,358.3 393.6,346.2 384.2,334.7 C374.8,323.2 362.8,307.1 352.6,293.8 C342.4,280.5 332.3,267.4 323.0,254.7 C313.7,241.9 303.2,226.4 296.9,217.3 C290.6,208.2 288.2,205.2 285.0,200.3 C281.8,195.4 279.0,189.8 277.8,187.7 L280.3,177.8 Z" fill="none" stroke="#2828a0" stroke-width="0.75"/>
<path d="M280.3,177.8 C283.9,183.0 294.6,198.6 302.0,209.0 C309.4,219.4 317.7,230.9 324.5,240.0 C331.3,249.1 336.8,255.7 343.0,263.5 C349.2,271.3 353.8,277.5 361.5,286.6 C369.2,295.7 382.0,309.8 389.5,318.0 C397.0,326.2 400.8,329.9 406.6,336.0 C412.5,342.1 419.3,349.6 424.6,354.9 C429.9,360.2 435.9,365.7 438.2,367.9" fill="none" stroke="#2a2a3a" stroke-width="0.7"/>
<path d="M468.3,98.2 C469.8,100.2 474.7,106.1 477.5,110.0 C480.3,113.9 481.7,116.2 485.0,121.5 C488.3,126.8 493.3,134.6 497.5,142.0 C501.7,149.4 505.3,155.7 510.0,166.0 C514.7,176.3 521.8,194.2 525.7,203.7 C529.7,213.2 531.3,216.3 533.7,223.0 C536.1,229.7 538.4,237.0 540.0,243.7 C541.6,250.4 542.5,256.3 543.5,263.0 C544.5,269.7 545.2,277.9 545.7,283.7 C546.2,289.5 546.2,293.3 546.2,298.0 C546.2,302.7 546.1,307.3 545.8,311.9 C545.5,316.4 544.6,322.7 544.2,325.3 C543.8,327.9 543.7,327.2 543.6,327.6" fill="none" stroke="#2a2a3a" stroke-width="0.7"/>
<path d="M459,126.5 C464,123 468.5,118 469.3,110 C469.8,104 468.5,100 467,97.8" fill="none" stroke="#c4c4ec" stroke-width="1.3"/>
<path d="M398.5,161.6 C402.2,168.0 412.9,186.1 421.0,200.0 C429.1,213.9 437.8,228.3 447.0,245.0 C456.2,261.7 468.8,285.5 476.0,300.0 C483.2,314.5 486.0,322.1 490.0,332.0 C494.0,341.9 498.2,354.8 499.9,359.3" fill="none" stroke="#2a2a3a" stroke-width="0.7"/>
<path d="M401,364.8 L408.5,366.2" stroke="#e8e070" stroke-width="0.9"/>
<path d="M405.5,364.5 L416,372.5" stroke="#80c0ff" stroke-width="0.9"/>
<path d="M415.5,372.3 L422,374.3" stroke="#e8e070" stroke-width="0.9"/>
</svg>
<svg class="a" style="left:0px;top:0px" width="830" height="445" viewBox="0 0 830 445"><rect x="376" y="66.8" width="214" height="14.7" rx="7.3" fill="#ffffff" fill-opacity="0.22"/><g opacity="0.45"><rect x="385.5" y="72" width="4.5" height="4" fill="none" stroke="#888" stroke-width="0.7"/><path d="M386.5,72 V70.5 C386.5,69 389,69 389,70.5 V72" stroke="#888" stroke-width="0.7" fill="none"/><rect x="395" y="70" width="5.5" height="6.5" fill="none" stroke="#555" stroke-width="0.6"/><path d="M396,70.5 L399.5,75.5" stroke="#222" stroke-width="1.2"/><text x="402" y="76" font-family="Liberation Sans" font-size="5.8" fill="#777">AutoCursor</text><path d="M431,73.5 H433 L432,74.5Z" fill="#555"/><path d="M437,76 H443 M440,71 V77 M437.5,73 H442.5" stroke="#7a9ac0" stroke-width="0.6"/><circle cx="450.5" cy="74.5" r="2" fill="none" stroke="#c89830" stroke-width="1"/><circle cx="447.5" cy="71" r="0.8" fill="#333"/><path d="M457.5,70.5 L460.5,76" stroke="#555" stroke-width="0.9"/><circle cx="467.5" cy="74" r="2.8" fill="#d8c8a0"/><circle cx="478" cy="74" r="2.8" fill="#d8c090"/><circle cx="487.5" cy="74" r="2.8" fill="#d8c090"/><circle cx="497" cy="74" r="2.8" fill="#a8c0d8"/><circle cx="506.5" cy="74" r="2.8" fill="#d8b070"/><path d="M506,71 A3,3 0 0 1 506,77" fill="#3a70c0"/><rect x="513.5" y="70.5" width="6" height="6" fill="none" stroke="#666" stroke-width="0.6"/><path d="M514.5,71 L518.5,76" stroke="#222" stroke-width="1.2"/><path d="M523.8,73.5 H525.6 L524.7,74.5Z" fill="#555"/><rect x="530" y="71" width="6" height="6" fill="#d8b070" stroke="#a08040" stroke-width="0.5"/><path d="M540.2,73.5 H542 L541.1,74.5Z" fill="#555"/></g><rect x="544.7" y="66.8" width="9" height="14.7" fill="#b8d0e8" fill-opacity="0.35"/><g opacity="0.5"><circle cx="549" cy="74" r="2.5" fill="none" stroke="#e0e0e0" stroke-width="0.8"/><path d="M555.5,71 L558.5,74.5" stroke="#222" stroke-width="1.2"/><rect x="557.5" y="74" width="4" height="3.5" fill="#e0f0f0" stroke="#d0a040" stroke-width="0.6"/><circle cx="567.5" cy="74" r="2.6" fill="none" stroke="#333" stroke-width="1.2"/><path d="M565,72.5 A3,3 0 0 1 570,72.5" stroke="#3a9a7a" stroke-width="0.8" fill="none"/><path d="M575,72 L577,70.5 M577,73 L579.5,77" stroke="#5a8a6a" stroke-width="0.8"/></g><g transform="translate(820.3,125.8)"><circle r="6.9" fill="#ffffff" fill-opacity="0.32" stroke="#8a949e" stroke-opacity="0.25" stroke-width="0.7"/><path d="M-4.8,4.8 L4.8,-4.8" stroke="#8a949e" stroke-opacity="0.35" stroke-width="0.6"/><g opacity="0.8"><path d="M-2.8,0 H2.8 M0,-2.8 V2.8" stroke="#5a8ed0" stroke-width="1.1"/></g></g><g transform="translate(820.3,143.3)"><circle r="6.9" fill="#ffffff" fill-opacity="0.32" stroke="#8a949e" stroke-opacity="0.25" stroke-width="0.7"/><path d="M-4.8,4.8 L4.8,-4.8" stroke="#8a949e" stroke-opacity="0.35" stroke-width="0.6"/><g opacity="0.8"><path d="M-2.5,-2.5 L2.5,2.5 M-2.5,2.5 L2.5,-2.5" stroke="#6a9ad0" stroke-width="0.8"/><circle r="0.9" fill="#d0a040"/></g></g><g transform="translate(820.3,160.8)"><circle r="6.9" fill="#ffffff" fill-opacity="0.32" stroke="#8a949e" stroke-opacity="0.25" stroke-width="0.7"/><path d="M-4.8,4.8 L4.8,-4.8" stroke="#8a949e" stroke-opacity="0.35" stroke-width="0.6"/><g opacity="0.8"><circle r="2.6" fill="none" stroke="#6a9ad0" stroke-width="0.9"/></g></g><g transform="translate(820.3,178.2)"><circle r="6.9" fill="#ffffff" fill-opacity="0.32" stroke="#8a949e" stroke-opacity="0.25" stroke-width="0.7"/><path d="M-4.8,4.8 L4.8,-4.8" stroke="#8a949e" stroke-opacity="0.35" stroke-width="0.6"/><g opacity="0.8"><path d="M-2.2,-3 C-0.5,-3 -0.5,-1 0,0 C0.5,1 0.5,3 2.2,3" stroke="#6a9ad0" stroke-width="0.9" fill="none"/></g></g><g transform="translate(820.3,195.7)"><circle r="6.9" fill="#ffffff" fill-opacity="0.32" stroke="#8a949e" stroke-opacity="0.25" stroke-width="0.7"/><path d="M-4.8,4.8 L4.8,-4.8" stroke="#8a949e" stroke-opacity="0.35" stroke-width="0.6"/><g opacity="0.8"><ellipse rx="2.6" ry="1.8" fill="none" stroke="#8aa0c0" stroke-width="0.8"/><path d="M-1.5,-1 L1.5,1" stroke="#8aa0c0" stroke-width="0.6"/></g></g><g transform="translate(820.3,213.2)"><circle r="6.9" fill="#ffffff" fill-opacity="0.32" stroke="#8a949e" stroke-opacity="0.25" stroke-width="0.7"/><path d="M-4.8,4.8 L4.8,-4.8" stroke="#8a949e" stroke-opacity="0.35" stroke-width="0.6"/><g opacity="0.8"><path d="M-2.6,-2.5 V2.5 M2.6,-2.5 V2.5 M-2.6,0 H2.6" stroke="#6a9ad0" stroke-width="0.9"/></g></g><g transform="translate(820.3,230.7)"><circle r="6.9" fill="#ffffff" fill-opacity="0.32" stroke="#8a949e" stroke-opacity="0.25" stroke-width="0.7"/><path d="M-4.8,4.8 L4.8,-4.8" stroke="#8a949e" stroke-opacity="0.35" stroke-width="0.6"/><g opacity="0.8"><path d="M-2.5,1.5 L1.5,-2.5 L2.5,-1.5 L-1.5,2.5Z" fill="#d8b060" opacity="0.8"/></g></g><g transform="translate(820.3,248.2)"><circle r="6.9" fill="#ffffff" fill-opacity="0.32" stroke="#8a949e" stroke-opacity="0.25" stroke-width="0.7"/><path d="M-4.8,4.8 L4.8,-4.8" stroke="#8a949e" stroke-opacity="0.35" stroke-width="0.6"/><g opacity="0.8"><rect x="-2.3" y="-2.3" width="4.6" height="4.6" fill="#c8a878" opacity="0.8"/></g></g><g transform="translate(820.3,265.6)"><circle r="6.9" fill="#ffffff" fill-opacity="0.32" stroke="#8a949e" stroke-opacity="0.25" stroke-width="0.7"/><path d="M-4.8,4.8 L4.8,-4.8" stroke="#8a949e" stroke-opacity="0.35" stroke-width="0.6"/><g opacity="0.8"><rect x="-2.8" y="-0.5" width="3" height="3" fill="#e0a040" opacity="0.8"/><rect x="-0.5" y="-2.8" width="3" height="3" fill="#8a70c0" opacity="0.8"/></g></g><g transform="translate(820.3,283.1)"><circle r="6.9" fill="#ffffff" fill-opacity="0.32" stroke="#8a949e" stroke-opacity="0.25" stroke-width="0.7"/><path d="M-4.8,4.8 L4.8,-4.8" stroke="#8a949e" stroke-opacity="0.35" stroke-width="0.6"/><g opacity="0.8"><path d="M-1.5,-2.8 H-2.5 V2.8 H-1.5 M1.5,-2.8 H2.5 V2.8 H1.5" stroke="#6a9ad0" stroke-width="0.7" fill="none"/></g></g><g transform="translate(820.3,300.6)"><circle r="6.9" fill="#ffffff" fill-opacity="0.32" stroke="#8a949e" stroke-opacity="0.25" stroke-width="0.7"/><path d="M-4.8,4.8 L4.8,-4.8" stroke="#8a949e" stroke-opacity="0.35" stroke-width="0.6"/><g opacity="0.8"><path d="M-0.8,-2.5 V-1 M-0.8,0 V1.5 M0.8,-1.5 V0 M0.8,1 V2.5" stroke="#6a8ad0" stroke-width="0.9"/></g></g><g transform="translate(820.3,318.1)"><circle r="6.9" fill="#ffffff" fill-opacity="0.32" stroke="#8a949e" stroke-opacity="0.25" stroke-width="0.7"/><path d="M-4.8,4.8 L4.8,-4.8" stroke="#8a949e" stroke-opacity="0.35" stroke-width="0.6"/><g opacity="0.8"><path d="M-2.5,-2 H2.5 L0.5,0.5 V2.5 H-0.5 V0.5Z" fill="#c0a0c8" opacity="0.8"/></g></g><g transform="translate(820.3,335.6)"><circle r="6.9" fill="#ffffff" fill-opacity="0.32" stroke="#8a949e" stroke-opacity="0.25" stroke-width="0.7"/><path d="M-4.8,4.8 L4.8,-4.8" stroke="#8a949e" stroke-opacity="0.35" stroke-width="0.6"/><g opacity="0.8"><path d="M0,-2.8 L2.6,-1.3 V1.3 L0,2.8 L-2.6,1.3 V-1.3Z" fill="#6a8ad8" opacity="0.8"/></g></g><g transform="translate(820.3,353.0)"><circle r="6.9" fill="#ffffff" fill-opacity="0.32" stroke="#8a949e" stroke-opacity="0.25" stroke-width="0.7"/><path d="M-4.8,4.8 L4.8,-4.8" stroke="#8a949e" stroke-opacity="0.35" stroke-width="0.6"/><g opacity="0.8"><circle r="2.2" fill="none" stroke="#c8a050" stroke-width="1.2" opacity="0.8"/></g></g><g transform="translate(820.3,370.5)"><circle r="6.9" fill="#ffffff" fill-opacity="0.32" stroke="#8a949e" stroke-opacity="0.25" stroke-width="0.7"/><path d="M-4.8,4.8 L4.8,-4.8" stroke="#8a949e" stroke-opacity="0.35" stroke-width="0.6"/><g opacity="0.8"><circle r="2.6" fill="none" stroke="#e07070" stroke-width="0.8"/><path d="M-1.8,-1.8 L1.8,1.8" stroke="#e07070" stroke-width="0.8"/></g></g><path d="M158.3,411.5 L164.6,404" stroke="#1a8a2a" stroke-width="1.2"/><path d="M161,407.5 L163.5,405" stroke="#1a6a1a" stroke-width="2"/><path d="M158.3,411.5 L168.9,407.6" stroke="#8a1a1a" stroke-width="1.2"/><path d="M162,410 L166,408.3" stroke="#7a0a0a" stroke-width="2"/><path d="M158.3,411.5 L166.5,422.2" stroke="#1a2ad0" stroke-width="1.2"/><path d="M162.5,417 L165,420.3" stroke="#0a1aa0" stroke-width="2"/><text x="164.8" y="404" font-family="Liberation Sans" font-size="4.8" font-weight="bold" fill="#20a030">Y</text><text x="170.6" y="409" font-family="Liberation Sans" font-size="4.8" font-weight="bold" fill="#e02020">X</text><text x="167.2" y="427.5" font-family="Liberation Sans" font-size="4.8" font-weight="bold" fill="#2030e0">Z</text><path d="M779.5,420 V430 M820.5,420 V430 M779.5,425.5 H820.5" stroke="#333" stroke-width="0.9"/></svg>
<div class="t" style="left:783.40px;top:421px;font-size:5.2px;color:#111;transform:scaleX(1.139);font-weight:bold;">222.841 mm</div>
<div class="t" style="left:792.00px;top:427px;font-size:5.2px;color:#111;transform:scaleX(1.045);font-weight:bold;">Metric</div>
<div class="a" style="left:4px;top:20px;width:655px;height:45px;border:5px solid #ee7f2f;border-radius:11px;box-shadow:3px 3px 7px rgba(0,0,0,.42), inset 3px 3px 4px rgba(0,0,0,.35)"></div>
</body></html>
